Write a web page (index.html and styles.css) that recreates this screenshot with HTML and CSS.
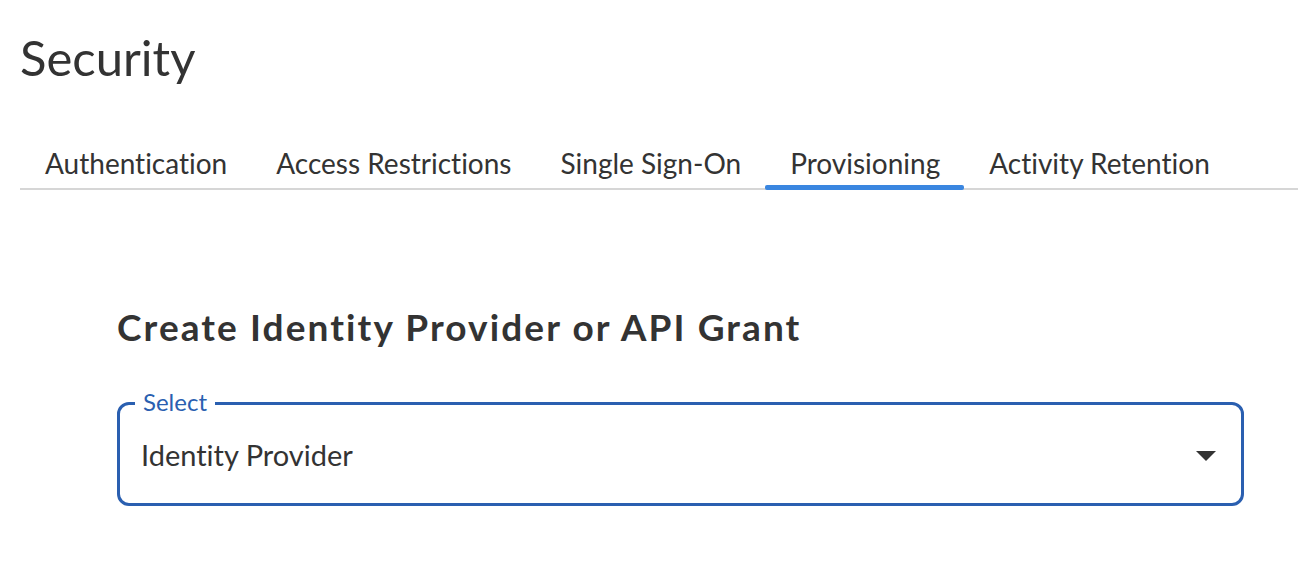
FILE: index.html
```html
<!DOCTYPE html>
<html>
<head>
<meta charset="utf-8">
<link rel="stylesheet" href="styles.css">
</head>
<body>
<div class="page">
  <h1 class="title">Security</h1>
  <nav class="tabs">
    <div class="tab">Authentication</div>
    <div class="tab">Access Restrictions</div>
    <div class="tab">Single Sign-On</div>
    <div class="tab active">Provisioning</div>
    <div class="tab">Activity Retention</div>
  </nav>
  <section class="content">
    <h2 class="heading">Create Identity Provider or API Grant</h2>
    <div class="select">
      <span class="select-label">Select</span>
      <span class="select-value">Identity Provider</span>
      <svg class="caret" width="20" height="10" viewBox="0 0 20 10"><path d="M0 0H20L10 10Z" fill="#333"/></svg>
    </div>
  </section>
</div>
</body>
</html>
```
FILE: styles.css
```css
* { box-sizing: border-box; }
body {
  margin: 0;
  background: #fff;
  font-family: Lato, "Noto Sans", sans-serif;
  font-variant-ligatures: none;
  color: #333;
}
.page {
  padding: 27px 0 0 20px;
}
.title {
  margin: 0;
  font-size: 49px;
  font-weight: 400;
  line-height: 60px;
  color: #333;
}
.tabs {
  display: flex;
  margin-top: 58px;
  border-bottom: 2px solid #d6d6d6;
}
.tab {
  position: relative;
  padding: 0 24px 7px 25px;
  font-size: 28px;
  line-height: 36px;
  color: #333;
}
.tab.active::after {
  content: "";
  position: absolute;
  left: 0;
  right: 0;
  bottom: -2px;
  height: 5px;
  border-radius: 2px;
  background: #3a86e0;
}
.content {
  padding: 115px 54px 0 97px;
}
.heading {
  margin: 0;
  font-size: 37px;
  font-weight: 700;
  line-height: 44px;
  letter-spacing: 2.1px;
  color: #333;
}
.select {
  position: relative;
  display: flex;
  align-items: center;
  justify-content: space-between;
  height: 104px;
  margin-top: 53px;
  padding: 0 25px 0 21px;
  border: 3px solid #2a5fb0;
  border-radius: 12px;
}
.select-label {
  position: absolute;
  top: -15px;
  left: 15px;
  padding: 0 8px;
  background: #fff;
  font-size: 24px;
  line-height: 24px;
  color: #2a5fb0;
}
.select-value {
  font-size: 29px;
  color: #333;
}
.caret {
  display: block;
  margin-top: 4px;
}
```
